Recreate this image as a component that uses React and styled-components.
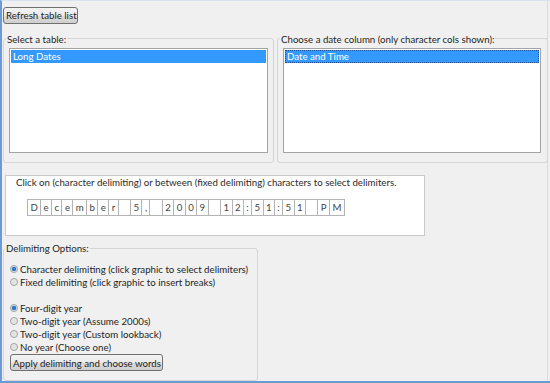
import React from "react";
import styled, { createGlobalStyle } from "styled-components";

const GlobalStyle = createGlobalStyle`
  html, body { margin: 0; padding: 0; background: #f0f0f0; }
  body { font-family: Lato, "Noto Sans", sans-serif; font-size: 9.7px; color: #1e1e1e; }
`;

const Frame = styled.div`
  box-sizing: border-box;
  width: 550px;
  height: 383px;
  border-left: 2px solid #6b9ad6;
  border-bottom: 2px solid #6b9ad6;
  border-top: 1px solid #d9e3ef;
  background: #f0f0f0;
`;

const Panel = styled.div`
  box-sizing: border-box;
  width: 546px;
  height: 100%;
  border-right: 1px solid #dadada;
  padding: 6px 0 0 1px;
  display: flex;
  flex-direction: column;
  align-items: flex-start;
  white-space: nowrap;
`;

const Button = styled.button`
  box-sizing: border-box;
  font-family: inherit;
  font-size: 9.7px;
  height: 17px;
  padding: 0 2px;
  border: 1px solid #707070;
  border-radius: 3px;
  background: linear-gradient(#f2f2f2, #ebebeb 50%, #dddddd 51%, #cfcfcf);
  color: #1e1e1e;
  white-space: nowrap;
  width: ${(p) => p.$w}px;
  margin-top: ${(p) => p.$mt || 0}px;
`;

const Row = styled.div`
  display: flex;
  gap: 3px;
  margin-top: 9px;
`;

const Group = styled.fieldset`
  box-sizing: border-box;
  margin: 0;
  width: ${(p) => p.$w}px;
  padding: ${(p) => p.$pad};
  border: 1px solid #d5d5d5;
  border-radius: 3px;
  min-width: 0;
`;

const Legend = styled.legend`
  padding: 0 1px;
  margin-left: ${(p) => p.$ml}px;
  line-height: 12px;
  font-size: 9.7px;
  color: #1e1e1e;
`;

const ListBox = styled.div`
  box-sizing: border-box;
  height: 105px;
  margin-top: 3px;
  border: 1px solid #a3a3a3;
  padding: 1px;
  background: #fff;
`;

const ListItem = styled.div`
  height: 13px;
  line-height: 13px;
  padding-left: 2px;
  background: ${(p) => (p.$selected ? "#3399ff" : "transparent")};
  color: ${(p) => (p.$selected ? "#fff" : "#1e1e1e")};
  outline: ${(p) => (p.$focus ? "1px dotted #1a4f99" : "none")};
  outline-offset: -1px;
`;

const DelimBox = styled.div`
  box-sizing: border-box;
  width: 420px;
  height: 62px;
  margin: 12px 0 0 2px;
  border: 1px solid #c9c9c9;
  background: #fff;
  padding: 0 0 0 10px;
`;

const DelimHint = styled.div`
  line-height: 12px;
  color: #2a2a2a;
`;

const Cells = styled.div`
  display: inline-flex;
  margin: 11px 0 0 11px;
  border-left: 1px solid #b4b4b4;
`;

const Cell = styled.span`
  box-sizing: border-box;
  height: 17px;
  line-height: 15px;
  min-width: ${(p) => (p.$blank ? 12.5 : 0)}px;
  padding: 0 2.4px;
  border: 1px solid #b4b4b4;
  border-left: none;
  color: #444;
  font-size: 9.7px;
  white-space: pre;
`;

const Options = styled(Group)`
  margin-top: 6px;
`;

const RadioRow = styled.label`
  display: flex;
  align-items: center;
  height: 13px;
  margin-top: ${(p) => p.$gap || 0}px;
  color: #1e1e1e;
`;

const RadioDot = styled.span`
  box-sizing: border-box;
  width: 8px;
  height: 8px;
  margin-right: 2px;
  border-radius: 50%;
  border: 1px solid #a0a0a0;
  background: ${(p) =>
    p.$checked
      ? "radial-gradient(circle, #3d88d4 0, #2c6fb8 1.8px, #d6e6f6 2.6px, #eef4fa 4px)"
      : "radial-gradient(circle, #dcdcdc 0, #f0f0f0 4px)"};
`;

const Radio = ({ checked, gap, children }) => (
  <RadioRow $gap={gap}>
    <RadioDot $checked={checked} />
    {children}
  </RadioRow>
);

const dateText = "December 5, 2009 12:51:51 PM";

export default function App() {
  return (
    <Frame>
      <GlobalStyle />
      <Panel>
        <Button $w={75}>Refresh table list</Button>
        <Row>
          <Group $w={271} $pad="0 5px 9px 5px">
            <Legend $ml={-3}>Select a table:</Legend>
            <ListBox>
              <ListItem $selected>Long Dates</ListItem>
            </ListBox>
          </Group>
          <Group $w={271} $pad="0 6px 9px 5px">
            <Legend $ml={-3}>Choose a date column (only character cols shown):</Legend>
            <ListBox>
              <ListItem $selected $focus>Date and Time</ListItem>
            </ListBox>
          </Group>
        </Row>
        <DelimBox>
          <DelimHint>
            Click on (character delimiting) or between (fixed delimiting) characters to select delimiters.
          </DelimHint>
          <Cells>
            {dateText.split("").map((ch, i) => (
              <Cell key={i} $blank={ch === " "}>
                {ch}
              </Cell>
            ))}
          </Cells>
        </DelimBox>
        <Options $w={255} $pad="8px 6px 9px 6px">
          <Legend $ml={-5}>Delimiting Options:</Legend>
          <Radio checked>Character delimiting (click graphic to select delimiters)</Radio>
          <Radio>Fixed delimiting (click graphic to insert breaks)</Radio>
          <Radio checked gap={13}>Four-digit year</Radio>
          <Radio>Two-digit year (Assume 2000s)</Radio>
          <Radio>Two-digit year (Custom lookback)</Radio>
          <Radio>No year (Choose one)</Radio>
          <Button $w={153} $mt={1}>
            Apply delimiting and choose words
          </Button>
        </Options>
      </Panel>
    </Frame>
  );
}
